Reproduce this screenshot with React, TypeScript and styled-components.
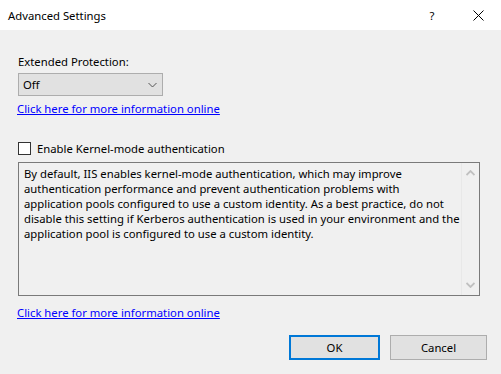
import React, { useState } from "react";
import styled, { createGlobalStyle } from "styled-components";

const GlobalStyle = createGlobalStyle`
  html, body {
    margin: 0;
    padding: 0;
  }
  body {
    font-family: "Noto Sans", "Open Sans", sans-serif;
    font-size: 11.3px;
    color: #000;
    background: #f0f0f0;
  }
`;

const StyledWindow = styled.div`
  width: 501px;
  height: 374px;
  display: flex;
  flex-direction: column;
  background: #f0f0f0;
  overflow: hidden;
`;

const StyledTitleBar = styled.div`
  height: 30px;
  background: #fff;
  display: flex;
  align-items: center;
  padding-left: 8px;
  box-sizing: border-box;
`;

const StyledTitle = styled.div`
  flex: 1;
  line-height: 15px;
`;

const StyledTitleButton = styled.div`
  width: 46px;
  height: 30px;
  display: flex;
  align-items: center;
  justify-content: center;
`;

const StyledContent = styled.div`
  display: flex;
  flex-direction: column;
  align-items: flex-start;
  padding: 24px 14px 0 17px;
  line-height: 15px;
`;

const StyledLabel = styled.div`
  margin-left: 1px;
`;

const StyledSelect = styled.div`
  margin-top: 4px;
  margin-left: 1px;
  width: 145px;
  height: 23px;
  box-sizing: border-box;
  border: 1px solid #adadad;
  background: #e1e1e1;
  display: flex;
  align-items: center;
  justify-content: space-between;
  padding: 0 5px 0 4px;
`;

const StyledLink = styled.a<{ $top: number }>`
  margin-top: ${(p) => p.$top}px;
  color: #0000ff;
  text-decoration: underline;
  cursor: pointer;
`;

const StyledCheckRow = styled.label`
  margin-top: 25px;
  margin-left: 1px;
  display: flex;
  align-items: center;
  gap: 6px;
  cursor: pointer;
`;

const StyledCheckbox = styled.span`
  width: 13px;
  height: 13px;
  box-sizing: border-box;
  border: 1px solid #333;
  background: #fff;
  display: flex;
  align-items: center;
  justify-content: center;
  font-size: 10px;
`;

const StyledTextBox = styled.div`
  margin-top: 6px;
  margin-left: 1px;
  width: 462px;
  height: 134px;
  box-sizing: border-box;
  border: 1px solid #7a7a7a;
  display: flex;
`;

const StyledText = styled.div`
  flex: 1;
  min-width: 0;
  overflow: hidden;
  padding: 3px 0 0 5px;
  white-space: nowrap;
`;

const StyledScrollbar = styled.div`
  flex-shrink: 0;
  width: 17px;
  border-left: 1px solid #e8e8e8;
  display: flex;
  flex-direction: column;
  justify-content: space-between;
  align-items: center;
  padding: 7px 0 7px;
`;

const StyledButtons = styled.div`
  align-self: stretch;
  display: flex;
  justify-content: flex-end;
  gap: 10px;
  margin-top: 15px;
`;

const StyledButton = styled.button<{ $primary?: boolean; $width: number }>`
  width: ${(p) => p.$width}px;
  height: 25px;
  box-sizing: border-box;
  background: #e1e1e1;
  border: ${(p) => (p.$primary ? "2px solid #0078d7" : "1px solid #adadad")};
  font-family: inherit;
  font-size: 11.3px;
  color: #000;
  padding: 0;
`;

const Chevron = ({ up, color, weight }: { up?: boolean; color: string; weight: number }) => (
  <svg width="9" height="6" viewBox="0 0 9 6">
    <path
      d={up ? "M0.5 5 L4.5 1 L8.5 5" : "M0.5 1 L4.5 5 L8.5 1"}
      fill="none"
      stroke={color}
      strokeWidth={weight}
    />
  </svg>
);

const lines = [
  "By default, IIS enables kernel-mode authentication, which may improve",
  "authentication performance and prevent authentication problems with",
  "application pools configured to use a custom identity. As a best practice, do not",
  "disable this setting if Kerberos authentication is used in your environment and the",
  "application pool is configured to use a custom identity.",
];

export default function App() {
  const [kernelMode, setKernelMode] = useState(false);

  return (
    <StyledWindow>
      <GlobalStyle />
      <StyledTitleBar>
        <StyledTitle>Advanced Settings</StyledTitle>
        <StyledTitleButton>?</StyledTitleButton>
        <StyledTitleButton>
          <svg width="11" height="11" viewBox="0 0 11 11">
            <path d="M0.5 0.5 L10.5 10.5 M10.5 0.5 L0.5 10.5" stroke="#000" strokeWidth="1" />
          </svg>
        </StyledTitleButton>
      </StyledTitleBar>
      <StyledContent>
        <StyledLabel>Extended Protection:</StyledLabel>
        <StyledSelect>
          <span>Off</span>
          <Chevron color="#555" weight={1} />
        </StyledSelect>
        <StyledLink $top={5}>Click here for more information online</StyledLink>
        <StyledCheckRow onClick={() => setKernelMode(!kernelMode)}>
          <StyledCheckbox>{kernelMode ? "✓" : null}</StyledCheckbox>
          <span>Enable Kernel-mode authentication</span>
        </StyledCheckRow>
        <StyledTextBox>
          <StyledText>
            {lines.map((line) => (
              <div key={line}>{line}</div>
            ))}
          </StyledText>
          <StyledScrollbar>
            <Chevron up color="#c0c0c0" weight={1.8} />
            <Chevron color="#c0c0c0" weight={1.8} />
          </StyledScrollbar>
        </StyledTextBox>
        <StyledLink $top={9}>Click here for more information online</StyledLink>
        <StyledButtons>
          <StyledButton $primary $width={91}>
            OK
          </StyledButton>
          <StyledButton $width={97}>Cancel</StyledButton>
        </StyledButtons>
      </StyledContent>
    </StyledWindow>
  );
}
